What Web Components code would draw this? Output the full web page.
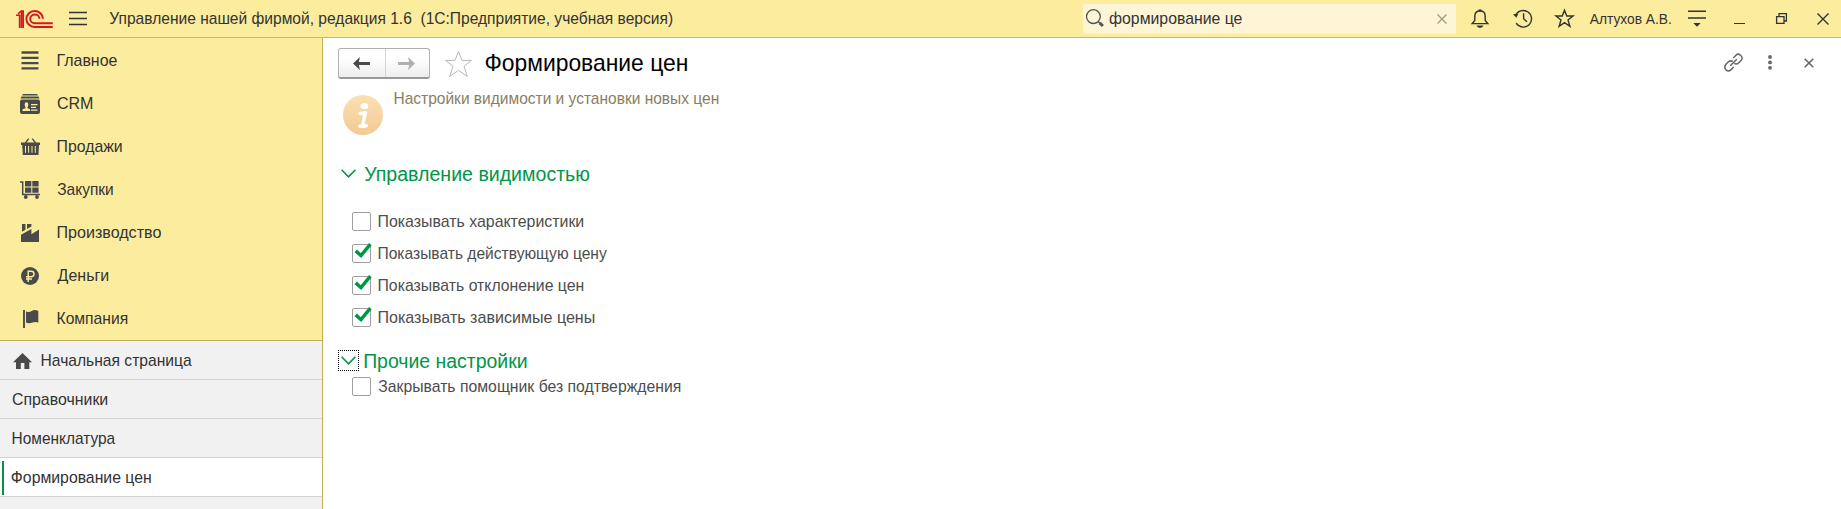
<!DOCTYPE html>
<html lang="ru">
<head>
<meta charset="utf-8">
<title>Формирование цен</title>
<style>
html,body{margin:0;height:100%;overflow:hidden;background:#fff}
body{font-family:"Liberation Sans",Arial,sans-serif;color:#333}
</style>
</head>
<body>
<app-window></app-window>
<script>
const define = (name, css, html, init) => {
  const t = document.createElement('template');
  t.innerHTML = `<style>*{box-sizing:border-box}${css}</style>${html}`;
  customElements.define(name, class extends HTMLElement {
    constructor() { super(); this.attachShadow({mode: 'open'}).append(t.content.cloneNode(true)); }
    connectedCallback() { if (init) init.call(this, this.shadowRoot); }
  });
};

/* One-line label whose ink spans exactly `w` pixels at font size `s`. */
const ctx = document.createElement('canvas').getContext('2d');
define('fit-text', ':host{display:block;flex:none;white-space:pre}span{display:inline-block;transform-origin:0 50%}', '<span><slot></slot></span>', function (r) {
  const s = this.getAttribute('s') || 17, w = +this.getAttribute('w'), span = r.querySelector('span');
  ctx.font = `${s * 10}px "Liberation Sans", Arial, sans-serif`;
  const m = ctx.measureText(this.textContent);
  const k = w * 10 / (m.actualBoundingBoxLeft + m.actualBoundingBoxRight);
  this.style.width = w + 'px';
  this.style.fontSize = s + 'px';
  this.style.lineHeight = '20px';
  this.style.height = '20px';
  span.style.transform = `translateX(${m.actualBoundingBoxLeft * k / 10 - .3}px) scaleX(${k})`;
});

const L = (d, w = 1.4) => `<path d="${d}" fill="none" stroke="currentColor" stroke-width="${w}"/>`;
const F = d => `<path d="${d}" fill="currentColor" fill-rule="evenodd"/>`;
const icons = {
  logo: [37, 18, `<g fill="none" stroke="#d9161c" stroke-width="2"><path d="M0 5.2H3.6V18M2 3.8L5.2 1H7.2V18M5.5 1.5V18" stroke-width="1.6"/><path d="M27 8.8A8.3 8 0 1 0 18.9 17H36.8M23.4 8.8A4.6 4.4 0 1 0 18.9 13.3H36.8"/></g>`],
  burger: [18, 15, L('M0 1.5H18M0 7.5H18M0 13.5H18', 1.3)],
  main: [18, 19, L('M.5 1.5H17.5M.5 6.8H17.5M.5 12.1H17.5M.5 17.4H17.5', 2.3)],
  crm: [20, 20, F('M3 0H17L18 1.5H2zM1.5 2.6H18.5L19.5 4.4H.5zM2 5.6H18Q20 5.6 20 7.6V18Q20 20 18 20H2Q0 20 0 18V7.6Q0 5.6 2 5.6zM6.5 8.3Q4.5 8.3 4.7 10.4Q4.8 12.3 5.5 13.2V14.2L2.5 15.3V17H10V15.3L7.5 14.2V13.2Q8.3 12 8.3 10.4Q8.3 8.3 6.5 8.3zM11 10V11.2H17.5V10zM11 12.8V14H16V12.8zM11 15.5V16.7H17.5V15.5z')],
  basket: [19, 17, F('M0 4.6H19V7H18L17.5 17H1.8L1.2 7H0zM4 8V14.8H5V8zM7.1 8V14.8H8.1V8zM10.5 8V14.8H11.5V8zM13.8 8V14.8H14.8V8z') + L('M4.4 5L7.7 .7M14.6 5L11.3 .7', 1.3)],
  cart: [20, 18, F('M5 0H11.3V5.4H5zM12.3 0H18.6V5.4H12.3zM5 6.5H11.3V11.8H5zM12.3 6.5H18.6V11.8H12.3z') + L('M0 .9H2.7V13.5H20', 1.5) + '<circle cx="5.8" cy="16" r="1.9" fill="currentColor"/><circle cx="17" cy="16" r="1.9" fill="currentColor"/>'],
  factory: [18, 18, F('M0 18V10.8L10.4 5V10.3L18 5.5V18zM1 0H4.5V5.7L1 7.8zM6 0H10.4V2.4L6 5z')],
  ruble: [18, 18, `<circle cx="9" cy="9" r="9" fill="currentColor"/><path d="M7.2 15V4.3H10.3Q13 4.3 13 7T10.3 9.7H5M5 12H11" fill="none" stroke="#fbec9e" stroke-width="1.4"/>`],
  flag: [15, 18, L('M1 0V18', 1.9) + F('M3 1.2Q6 3 8.5 1Q12-.8 15.3 1V12.6Q12.5 11.5 9.5 12.6Q6 14 3 12.5z')],
  home: [19, 16, F('M9.5 0L19 9.2H16.3V16H11.4V10H7.8V16H3V9.2H0z')],
  search: [19, 19, L('M14.3 7.6A6.9 6.9 0 1 1 .5 7.6A6.9 6.9 0 1 1 14.3 7.6z', 1.3) + L('M12.2 12.5L13.8 14', 1.4) + L('M13.6 13.8L16.9 17', 3)],
  clear: [10, 10, L('M.5 .5L9.5 9.5M9.5 .5L.5 9.5', 1.3)],
  bell: [18, 19, L('M1.2 14.6H16.8L14.2 11.5V7.2Q14.2 2 9 2T3.8 7.2V11.5z', 1.4) + F('M7.4 2.2V.8Q9-.4 10.6.8V2.2zM5.4 16.6H12.6Q11.5 19 9 19T5.4 16.6z')],
  history: [20, 19, L('M2.4 7A8.3 8.3 0 1 1 3.2 14.2M10.6 4.3V9.7L14 12.8', 1.4) + F('M0 5.2L5.4 4.7L3.4 8.8z')],
  star: [19, 19, L('M9.5 1.2L11.8 7H18L13 10.9L14.9 17.3L9.5 13.7L4.1 17.3L6 10.9L1 7H7.2z', 1.4)],
  view: [18, 17, L('M0 1.2H18M0 8H18', 1.5) + F('M5.3 13H12.7L9 16.8z')],
  min: [11, 11, L('M0 10.5H11', 1)],
  restore: [11, 11, L('M.6 3.6H8V10.4H.6zM3 3.5V.6H10.4V8H8', 1.3)],
  close: [12, 12, L('M.5 .5L11.5 11.5M11.5 .5L.5 11.5', 1.4)],
  back: [17, 13, F('M0 6.5L7 0L5.8 5H17V8H5.8L7 13z')],
  forward: [17, 13, F('M17 6.5L10 0L11.2 5H0V8H11.2L10 13z')],
  fav: [29, 28, L('M14.5 1.5L18 10.4H27.5L20 16.3L23.3 26.5L14.5 20.4L5.7 26.5L9 16.3L1.5 10.4H11z', 1)],
  link: [19, 19, L('M9.3 5L12.2 2.1Q14 .2 16.3 2Q19.5 4.5 17 7.6L14.5 10Q12.5 11.8 10.2 10.4M9.7 14L6.8 16.9Q4.5 19 2 16.9Q-.4 14.2 1.8 11.5L4.4 8.8Q6.5 7.1 8.8 8.5', 1.5) + L('M6.2 12.8L12.8 6.2', 1.5)],
  dots: [4, 15, '<g fill="currentColor"><circle cx="2" cy="2" r="1.9"/><circle cx="2" cy="7.4" r="1.9"/><circle cx="2" cy="12.8" r="1.9"/></g>'],
  x: [10, 10, L('M.7 .7L9.3 9.3M9.3 .7L.7 9.3', 1.6)],
  info: [40, 40, '<defs><linearGradient id="g" x2="0" y2="1"><stop stop-color="#fbdfb4"/><stop offset="1" stop-color="#f2ca93"/></linearGradient></defs><circle cx="20" cy="20" r="20" fill="url(#g)"/><ellipse cx="21.4" cy="11.1" rx="3.9" ry="3.2" fill="#fff"/><path d="M17.2 18.6Q20 18.4 22.3 17.8L19.6 31.2Q21.5 31.4 23.3 30.6M16.8 31.2H20" fill="none" stroke="#fff" stroke-width="3.5" stroke-linecap="round" stroke-linejoin="round"/>'],
  chevron: [15, 9, L('M.6 .8L7.5 7.8L14.4 .8', 1.6)],
  check: [18, 16, '<path d="M2 8L6 11.6L14.3 1.4" fill="none" stroke="#009646" stroke-width="3.4" stroke-linecap="square"/>']
};
define('ui-icon', ':host{display:block;flex:none;line-height:0}svg{display:block;overflow:visible}', '<div></div>', function (r) {
  const [w, h, body] = icons[this.getAttribute('name')];
  r.querySelector('div').innerHTML = `<svg width="${w}" height="${h}" viewBox="0 0 ${w} ${h}">${body}</svg>`;
});

define('app-header', `
:host{display:flex;align-items:center;height:38px;background:#fbec9e;border-bottom:1px solid #c9b964;padding:0 12px 0 16px}
.title{margin-left:23px}.burger{margin-left:16px}
.search{margin-left:auto;width:373px;height:30px;background:#fdf5d6;border-radius:2px;display:flex;align-items:center;padding:0 9px 0 3px;color:#555}
.q{margin-left:4.5px;color:#333}.clear{margin-left:auto;color:#a09a84}
.tools{display:grid;grid-template-columns:41.5px 42px 35.5px 98px 46px 42px 41px 12px;align-items:center;justify-items:start;padding-left:15px;width:373px}
`, `<ui-icon name="logo"></ui-icon><ui-icon class="burger" name="burger"></ui-icon>
<fit-text class="title" w="562.5">Управление нашей фирмой, редакция 1.6  (1С:Предприятие, учебная версия)</fit-text>
<div class="search"><ui-icon name="search"></ui-icon><fit-text class="q" w="132">формирование це</fit-text><ui-icon class="clear" name="clear"></ui-icon></div>
<div class="tools"><ui-icon name="bell"></ui-icon><ui-icon name="history"></ui-icon><ui-icon name="star"></ui-icon><fit-text s="14" w="81">Алтухов А.В.</fit-text><ui-icon name="view"></ui-icon><ui-icon name="min"></ui-icon><ui-icon name="restore"></ui-icon><ui-icon name="close"></ui-icon></div>`);

define('menu-item', ':host{display:grid;grid-template-columns:20px 1fr;gap:18px;align-items:center;height:43px;padding-left:20px}div{display:grid;justify-items:center;color:#4a4a4a}', '<div></div><slot></slot>', function (r) {
  r.querySelector('div').innerHTML = `<ui-icon name="${this.getAttribute('icon')}"></ui-icon>`;
});
define('open-tab', `:host{display:flex;align-items:center;height:39px;padding:1px 0 0 12.5px;background:#f1f1f1;border-bottom:1px solid #d3d3d3;color:#333}
:host([home]){gap:10px}
:host([active]){background:#fff;padding-left:2px;gap:8px}
:host([active])::before{content:"";width:2px;height:34px;background:#009646}`, '<slot></slot>');

define('side-bar', `:host{display:flex;flex-direction:column;background:#f1f1f1;border-right:1px solid #c2ae58}
nav{height:303px;background:#fbec9e;border-bottom:1px solid #c2ae58;padding-top:1px}`, `
<nav><menu-item icon="main"><fit-text w="59">Главное</fit-text></menu-item>
<menu-item icon="crm"><fit-text w="34.5">CRM</fit-text></menu-item>
<menu-item icon="basket"><fit-text w="64">Продажи</fit-text></menu-item>
<menu-item icon="cart"><fit-text w="55">Закупки</fit-text></menu-item>
<menu-item icon="factory"><fit-text w="103">Производство</fit-text></menu-item>
<menu-item icon="ruble"><fit-text w="50.5">Деньги</fit-text></menu-item>
<menu-item icon="flag"><fit-text w="69.5">Компания</fit-text></menu-item></nav>
<open-tab home><ui-icon name="home" style="color:#4a4a4a"></ui-icon><fit-text w="150">Начальная страница</fit-text></open-tab>
<open-tab><fit-text w="94.5">Справочники</fit-text></open-tab>
<open-tab><fit-text w="102.5">Номенклатура</fit-text></open-tab>
<open-tab active><fit-text w="139">Формирование цен</fit-text></open-tab>`);

define('nav-buttons', `:host{display:grid;grid-template-columns:46px 1fr;width:92px;height:31px;border:1px solid #b0b0b0;border-bottom:2px solid #999;border-radius:3px;background:linear-gradient(#fff 30%,#eee)}
div{display:grid;place-items:center;color:#4a4a4a;padding-right:2px}div+div{border-left:1px solid #d4d4d4;color:#b0b0b0}`,
'<div><ui-icon name="back"></ui-icon></div><div><ui-icon name="forward"></ui-icon></div>');

define('check-row', `:host{display:flex;align-items:center;gap:7.5px;height:19px;color:#4d4d4d;padding-left:14px}
.box{position:relative;width:19px;height:19px;border:1px solid #a0a0a0;border-radius:2px;background:#fff}
ui-icon{position:absolute;left:2px;top:-1px;display:none}:host([checked]) ui-icon{display:block}`,
'<div class="box"><ui-icon name="check"></ui-icon></div><slot></slot>');

define('section-title', `:host{display:flex;align-items:center;height:21px;color:#009646;gap:6px}
div{width:21px;height:21px;display:grid;place-items:center}:host([focused]) div{border:1px dotted #000}`,
'<div><ui-icon name="chevron"></ui-icon></div><slot></slot>');

define('settings-form', `:host{display:block;padding:10px 27px 0 15px}
.head{display:flex;align-items:center;height:31px}
.fav{margin-left:14px;color:#b3b9c0}.head fit-text{margin:-2px 0 0 12.5px;color:#000}
.acts{margin-left:auto;margin-top:-2px;display:flex;align-items:center;color:#666}.acts :nth-child(2){margin-left:25px}.acts :nth-child(3){margin-left:32px}
.info{display:flex;height:56px;padding:10px 0 0 5px;gap:11.5px;color:#8a7e62}
.info ui-icon{margin-top:6px}
.s1{margin-top:28px}.list{display:grid;gap:13px;margin-top:28px}.s2{margin-top:23px}.last{margin-top:6px}`, `
<div class="head"><nav-buttons></nav-buttons><ui-icon class="fav" name="fav"></ui-icon><fit-text s="24" w="201">Формирование цен</fit-text>
<div class="acts"><ui-icon name="link"></ui-icon><ui-icon name="dots"></ui-icon><ui-icon name="x"></ui-icon></div></div>
<div class="info"><ui-icon name="info"></ui-icon><fit-text w="323.5">Настройки видимости и установки новых цен</fit-text></div>
<section-title class="s1"><fit-text s="20" w="224.5">Управление видимостью</fit-text></section-title>
<div class="list"><check-row><fit-text w="204.5">Показывать характеристики</fit-text></check-row>
<check-row checked><fit-text w="228">Показывать действующую цену</fit-text></check-row>
<check-row checked><fit-text w="204.5">Показывать отклонение цен</fit-text></check-row>
<check-row checked><fit-text w="215.5">Показывать зависимые цены</fit-text></check-row></div>
<section-title class="s2" focused><fit-text s="20" w="161.5">Прочие настройки</fit-text></section-title>
<check-row class="last"><fit-text w="301.5">Закрывать помощник без подтверждения</fit-text></check-row>`);

define('app-window', ':host{display:grid;grid-template:38px 1fr/323px 1fr;height:100vh}app-header{grid-column:1/-1}',
'<app-header></app-header><side-bar></side-bar><settings-form></settings-form>');
</script>
</body>
</html>
